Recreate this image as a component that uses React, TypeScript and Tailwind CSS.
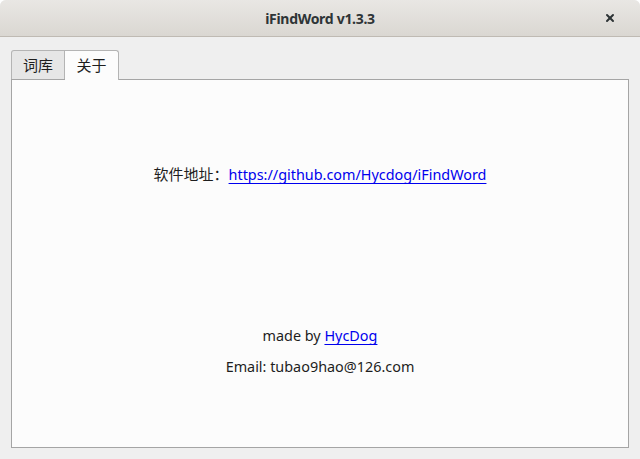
import { X } from 'lucide-react';

const font = { fontFamily: '"Noto Sans", "Noto Sans CJK SC", sans-serif' };

export default function App() {
    return (
        <div className="w-[640px] h-[459px] bg-[#efefef] flex flex-col overflow-hidden rounded-t-[6px] text-[#1e1e1e]" style={font}>
            {/* Title bar */}
            <div className="h-[37px] shrink-0 flex items-center justify-center relative bg-gradient-to-b from-[#e9e7e4] to-[#dad7d2] border-b border-[#bfbab3]">
                <span className="text-[14px] font-bold text-[#2e3436] tracking-[-0.3px]">iFindWord v1.3.3</span>
                <X size={12} strokeWidth={4} className="absolute right-[24px] top-[12px] text-[#2e3436]" />
            </div>

            {/* Tabs */}
            <div className="flex items-end pl-[11px] pt-[11px] h-[42px] shrink-0">
                <div className="w-[54px] h-[29px] flex items-center justify-center bg-[#e6e6e6] border border-b-0 border-[#b4b4b4] rounded-tl-[3px] text-[15px]">
                    词库
                </div>
                <div className="w-[54px] h-[30px] flex items-center justify-center bg-[#fcfcfc] border border-l-0 border-b-0 border-[#b4b4b4] rounded-tr-[3px] text-[15px] relative z-10 -mb-px">
                    关于
                </div>
            </div>

            {/* Panel */}
            <div className="ml-[11px] mr-[11px] h-[369px] bg-[#fcfcfc] border border-[#a5a5a5] flex flex-col items-center pt-[84px] text-[14.4px]">
                <div className="leading-[20px] flex items-baseline">
                    <span className="text-[15px]">软件地址：</span>
                    <span className="text-[#0000ee] underline underline-offset-[3px]">https://github.com/Hycdog/iFindWord</span>
                </div>
                <div className="leading-[20px] mt-[141px]">
                    made by <span className="text-[#0000ee] underline underline-offset-[3px]">HycDog</span>
                </div>
                <div className="leading-[20px] mt-[11px]">Email: tubao9hao@126.com</div>
            </div>
        </div>
    );
}
